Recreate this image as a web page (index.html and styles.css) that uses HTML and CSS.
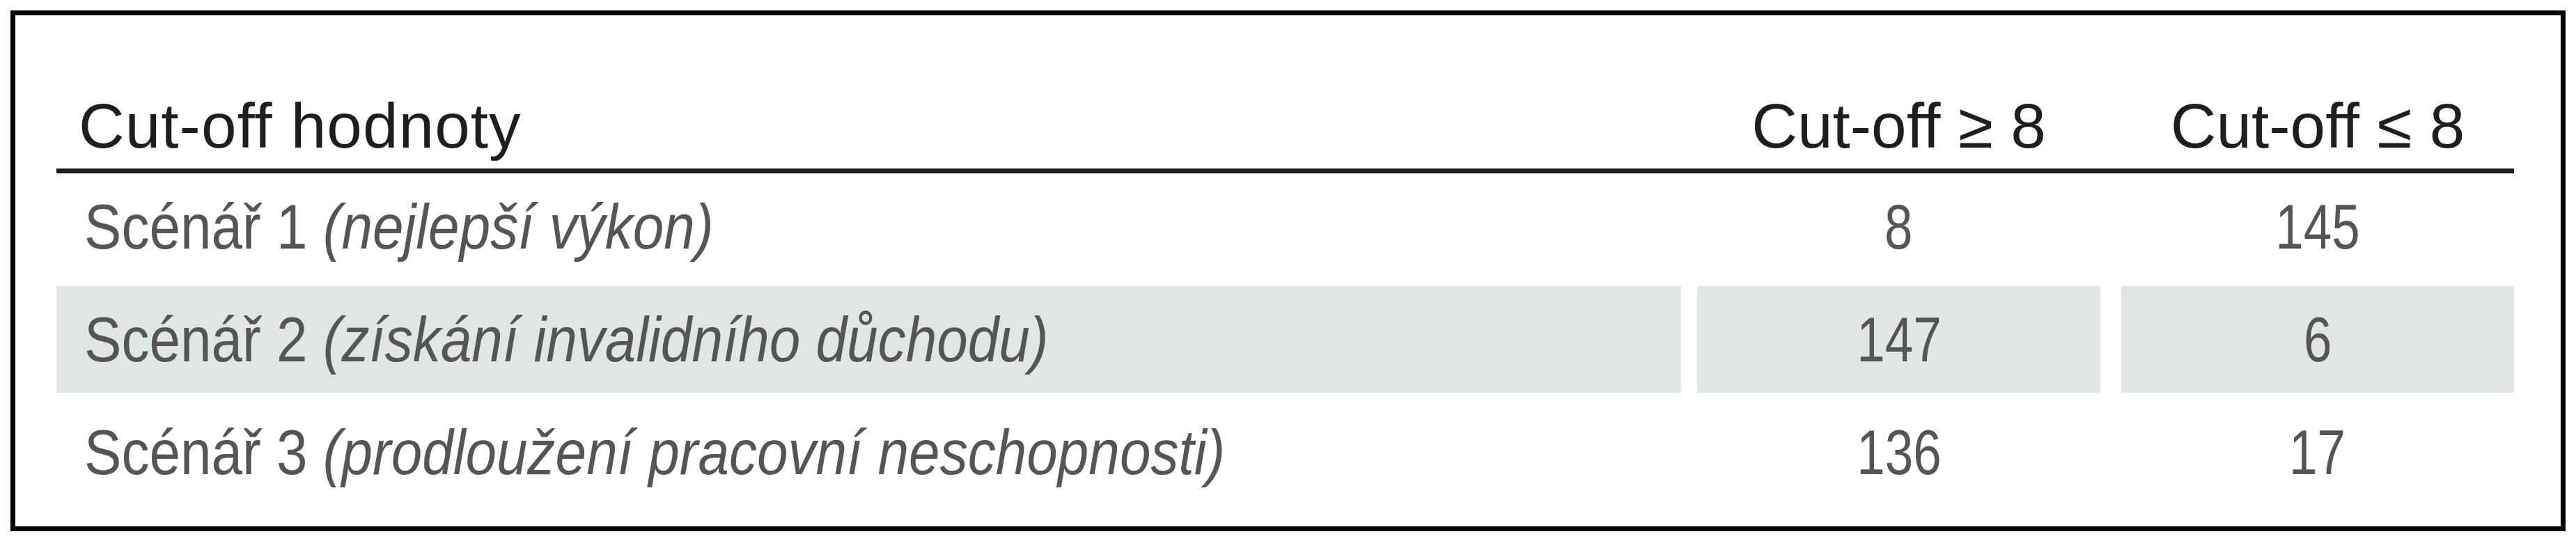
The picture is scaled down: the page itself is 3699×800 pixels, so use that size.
FILE: index.html
```html
<!DOCTYPE html>
<html lang="cs">
<head>
<meta charset="utf-8">
<title>Cut-off hodnoty</title>
<link rel="stylesheet" href="styles.css">
</head>
<body>
<div class="box">
  <div class="head">
    <div class="hcell label">Cut-off hodnoty</div>
    <div class="hcell num">Cut-off ≥ 8</div>
    <div class="hcell num c3">Cut-off ≤ 8</div>
  </div>
  <div class="row">
    <div class="cell label"><span class="txt">Scénář 1 <em>(nejlepší výkon)</em></span></div>
    <div class="cell num"><span class="txt">8</span></div>
    <div class="cell num c3"><span class="txt">145</span></div>
  </div>
  <div class="row shaded">
    <div class="cell label"><span class="txt">Scénář 2 <em>(získání invalidního důchodu)</em></span></div>
    <div class="cell num"><span class="txt">147</span></div>
    <div class="cell num c3"><span class="txt">6</span></div>
  </div>
  <div class="row">
    <div class="cell label"><span class="txt">Scénář 3 <em>(prodloužení pracovní neschopnosti)</em></span></div>
    <div class="cell num"><span class="txt">136</span></div>
    <div class="cell num c3"><span class="txt">17</span></div>
  </div>
</div>
</body>
</html>
```

FILE: styles.css
```css
html, body {
  margin: 0;
  padding: 0;
  background: #ffffff;
}

body {
  padding: 15px 0 0 15px;
}

.box {
  box-sizing: border-box;
  width: 3669px;
  height: 748px;
  border: 7px solid #000000;
  padding: 0 67px 29px 59px;
  display: flex;
  flex-direction: column;
  gap: 9px;
}

.head,
.row {
  display: grid;
  grid-template-columns: 2333px 579px 571px;
  column-gap: 23px;
}

.head {
  height: 220px;
  border-bottom: 7px solid #1c1c1c;
  margin-bottom: -9px;
  align-items: end;
}

.hcell {
  font-family: "Liberation Sans", Arial, sans-serif;
  font-size: 91px;
  line-height: 91px;
  color: #1e1e1e;
  padding-bottom: 16px;
  white-space: nowrap;
}

.hcell.label {
  padding-left: 32px;
  letter-spacing: 1px;
}

.row {
  height: 153px;
  align-items: stretch;
}

.cell {
  font-family: "Liberation Sans", Arial, sans-serif;
  font-size: 91px;
  line-height: 91px;
  color: #555555;
  display: flex;
  align-items: center;
  white-space: nowrap;
}

.cell .txt {
  display: inline-block;
}

.cell.label {
  padding-left: 40px;
}

.cell.label .txt {
  transform: scaleX(0.88);
  transform-origin: left center;
}

.cell em {
  font-style: italic;
}

.num {
  text-align: center;
  justify-content: center;
}

.num .txt {
  transform: scaleX(0.8);
  transform-origin: center center;
}

.c3 {
  margin-left: 7px;
}

.shaded .cell {
  background: #dfe6e4;
}
```
